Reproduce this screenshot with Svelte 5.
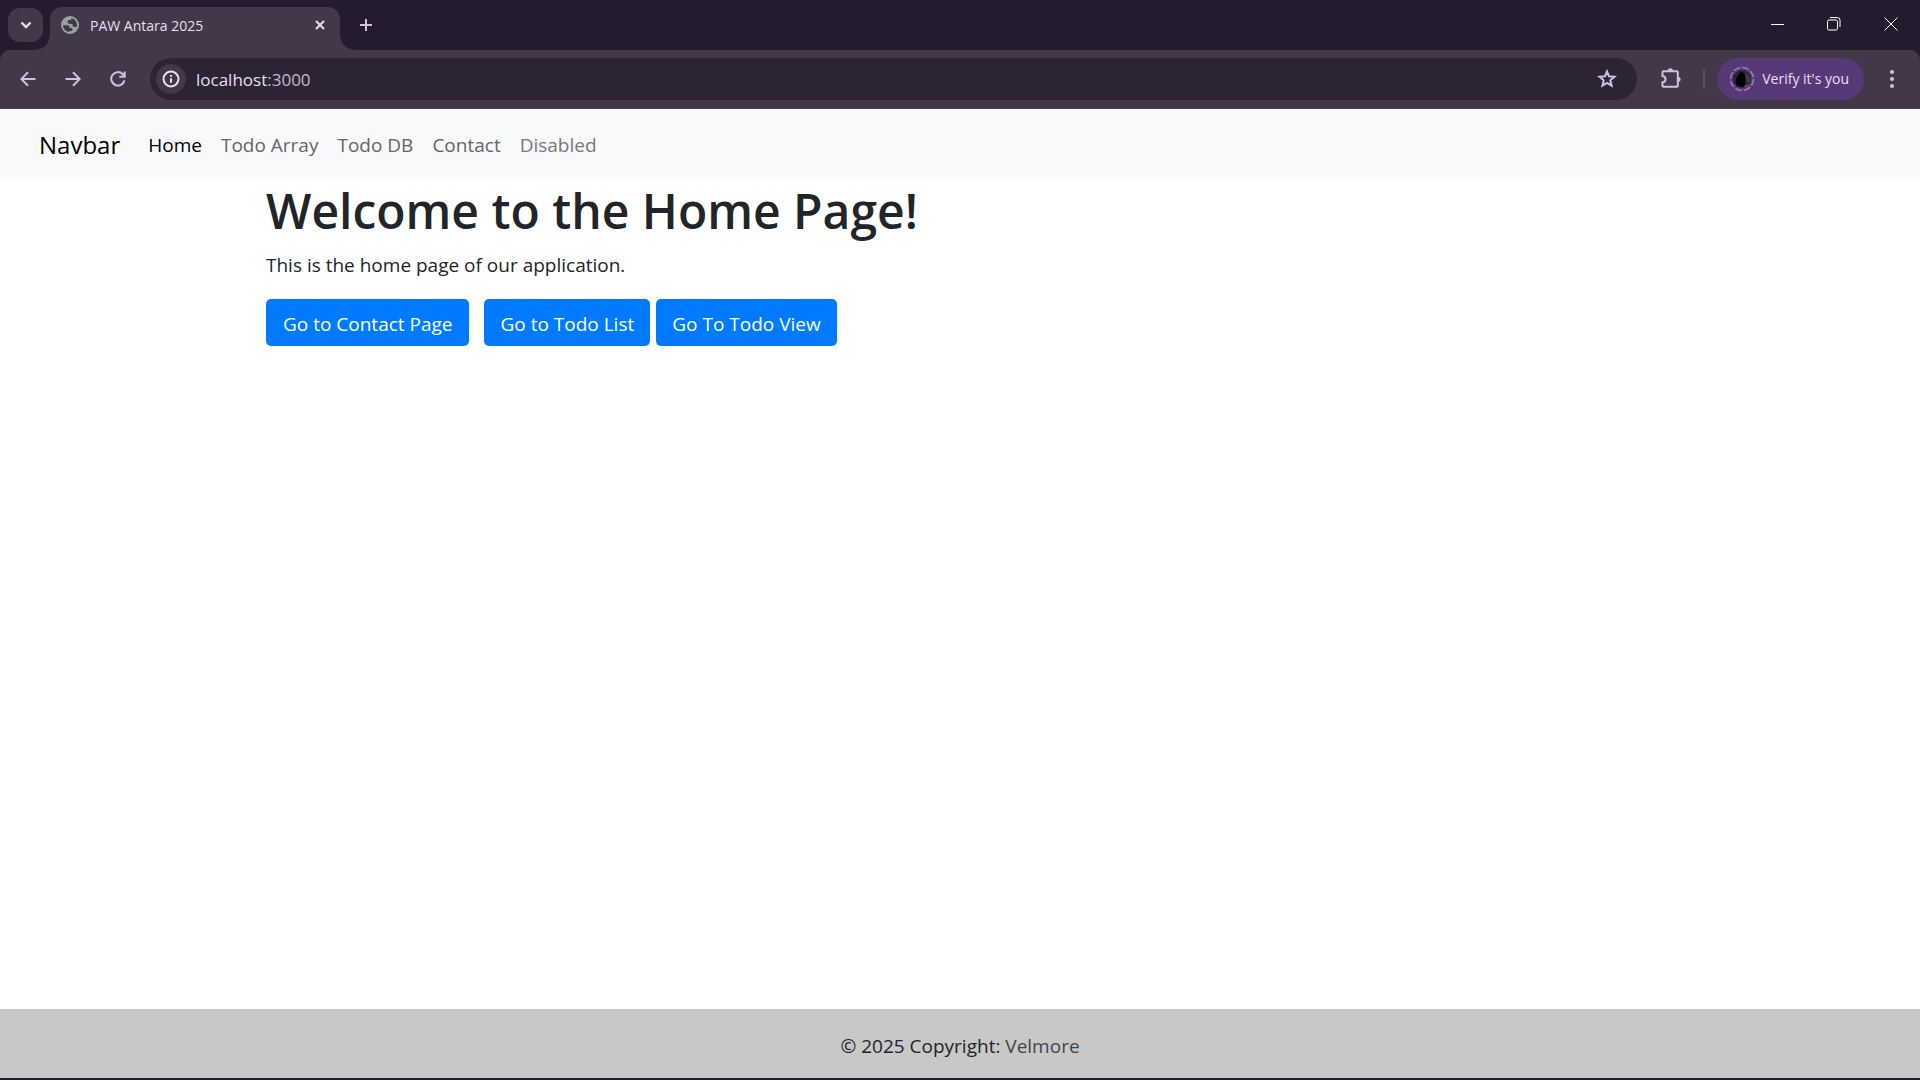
<script>
  const links = [
    { label: 'Home', state: 'active' },
    { label: 'Todo Array', state: '' },
    { label: 'Todo DB', state: '' },
    { label: 'Contact', state: '' },
    { label: 'Disabled', state: 'disabled' }
  ];
</script>

<div class="window">
  <header class="tabstrip">
    <button class="tab-search" aria-label="Search tabs">
      <svg width="12" height="8" viewBox="0 0 12 8"><path d="M1.5 1.5 6 6l4.500-4.500" /></svg>
    </button>
    <div class="tab">
      <svg class="globe" width="18" height="18" viewBox="0 0 18 18">
        <circle cx="9" cy="9" r="9" fill="#9aa0a6" />
        <path d="M2 9.300h4.500c1.300 0 2 .8 2 2v.6h2.200c.5 0 .8.4.8.8v.8c0 .9-.7 1.500-1.600 1.500H8.300v1C4.700 15.700 2 12.800 2 9.300zM10.500 2.200c3 .6 5.500 3.400 5.500 6.800 0 .7-.1 1.300-.3 1.900h-2.200c-1.300 0-2-.9-2-2V8H9.200c-1.500 0-2.700-.9-2.700-2.200S7.500 4 8.700 4h.6c.7 0 1.200-.5 1.200-1.200z" fill="#42384a" />
      </svg>
      <span class="tab-title">PAW Antara 2025</span>
      <button class="icon small" aria-label="Close tab">
        <svg width="10" height="10" viewBox="0 0 10 10"><path d="m1 1 8 8M9 1 1 9" /></svg>
      </button>
    </div>
    <button class="icon new-tab" aria-label="New tab">
      <svg width="14" height="14" viewBox="0 0 14 14"><path d="M7 1v12M1 7h12" /></svg>
    </button>
    <div class="controls">
      <button aria-label="Minimize"><svg width="14" height="14" viewBox="0 0 14 14"><path d="M1 7.500h13" /></svg></button>
      <button aria-label="Restore">
        <svg width="14" height="14" viewBox="0 0 14 14"><rect x=".5" y="3" width="10" height="10" rx="1.500" /><path d="M3 .6h7.500a2.500 2.500 0 0 1 2.500 2.500V10" /></svg>
      </button>
      <button aria-label="Close"><svg width="14" height="14" viewBox="0 0 14 14"><path d="m.5.5 13 13M13.500.5l-13 13" /></svg></button>
    </div>
  </header>

  <div class="toolbar">
    <div class="history">
      <button class="icon" aria-label="Back"><svg width="16" height="16" viewBox="0 0 16 16"><path d="M15.500 8H1.500M8 1.200 1.300 8 8 14.800" /></svg></button>
      <button class="icon" aria-label="Forward"><svg width="16" height="16" viewBox="0 0 16 16"><path d="M.5 8h14M8 1.200 14.700 8 8 14.800" /></svg></button>
      <button class="icon" aria-label="Reload"><svg width="16" height="16" viewBox="0 0 16 16"><path d="M14.500 9.200A6.700 6.700 0 1 1 12.800 3.200L14.500 5M14.700.5v5.300H9.300" /></svg></button>
    </div>
    <div class="omnibox">
      <button class="info" aria-label="Site information">
        <svg width="18" height="18" viewBox="0 0 18 18"><circle cx="9" cy="9" r="7.500" /><path d="M9 8.200v4.600M9 5v1.800" /></svg>
      </button>
      <div class="address" role="textbox" aria-label="Address" tabindex="0"><span>localhost</span>:3000</div>
      <button class="icon" aria-label="Bookmark">
        <svg width="20" height="20" viewBox="0 0 20 20"><path d="m10 2.400 2 4.900 5.500.5-4.200 3.500 1.300 5.300L10 13.800l-4.600 2.800 1.300-5.300-4.200-3.500 5.500-.5z" /></svg>
      </button>
    </div>
    <button class="icon extensions" aria-label="Extensions">
      <svg width="22" height="22" viewBox="0 0 22 22">
        <path d="M3.500 3.200h13.300q1 0 1 1v13.600q0 1-1 1H3.500q-1 0-1-1v-3.600c4-.3 4-5.800 0-6.200V4.200q0-1 1-1z" />
        <path class="solid" d="M7.700 2.800a2.600 2.600 0 0 1 5.200 0zM18.200 8.800a2.500 2.500 0 0 1 0 5z" />
      </svg>
    </button>
    <span class="separator"></span>
    <button class="profile">
      <svg width="26" height="26" viewBox="0 0 26 26">
        <circle class="dashes" cx="13" cy="13" r="11.500" />
        <circle cx="13" cy="13" r="9" fill="#29252a" />
        <path d="M8 20c-2-4-1-8 1-10l2-4 4 1 2 5-1 9z" fill="#020204" />
        <path d="m16 19 4-1-2 3h-3z" fill="#83451f" />
        <path d="M16 7c4 1 5 4 5 9l-4 1z" fill="#443a36" />
      </svg>
      Verify it's you
    </button>
    <button class="icon menu" aria-label="Menu">
      <svg width="6" height="20" viewBox="0 0 6 20"><g class="solid"><circle cx="3" cy="3" r="2" /><circle cx="3" cy="10" r="2" /><circle cx="3" cy="17" r="2" /></g></svg>
    </button>
  </div>

  <nav class="navbar">
    <a class="brand" href="#home">Navbar</a>
    {#each links as link}
      <a class="link {link.state}" href="#{link.label}">{link.label}</a>
    {/each}
  </nav>

  <main>
    <h1>Welcome to the Home Page!</h1>
    <p>This is the home page of our application.</p>
    <div class="actions">
      <a class="btn first" href="#contact">Go to Contact Page</a>
      <a class="btn" href="#todo-list">Go to Todo List</a>
      <a class="btn" href="#todo-view">Go To Todo View</a>
    </div>
  </main>

  <footer>© 2025 Copyright: <a href="#velmore">Velmore</a></footer>
</div>

<style>
  :global(body) { margin: 0; background: #fff; }
  * { box-sizing: border-box; }
  .window {
    min-height: 100vh;
    display: flex;
    flex-direction: column;
    font: 19px/30px "Segoe UI", "Open Sans", "Noto Sans", sans-serif;
    color: #212529;
    background: linear-gradient(#241b2e 80px, #fff 80px);
    border-bottom: 2px solid #241b2e;
  }
  button { font: inherit; border: 0; padding: 0; background: none; color: inherit; display: flex; align-items: center; justify-content: center; }
  a { text-decoration: none; color: inherit; }
  svg { display: block; fill: none; stroke: currentColor; stroke-width: 2; flex: none; }
  .solid { fill: currentColor; stroke: none; }

  .tabstrip { display: flex; height: 50px; background: #241b2e; color: #dfd3e8; padding: 0 1px 0 8px; }
  .tab-search { width: 35px; height: 34px; margin: 8px 7px 0 0; border-radius: 12px; background: #42384a; color: #eadff0; }
  .tab-search svg { stroke-width: 2.4; }
  .tab {
    position: relative;
    display: flex;
    align-items: center;
    width: 290px;
    margin-top: 7px;
    padding: 0 10px 7px 11px;
    gap: 11px;
    border-radius: 12px 12px 0 0;
    background: #42384a;
    color: #eadff0;
  }
  .tab::before, .tab::after { content: ""; position: absolute; bottom: 0; width: 14px; height: 14px; }
  .tab::before { left: -14px; background: radial-gradient(circle at 0 0, transparent 13px, #42384a 14px); }
  .tab::after { right: -14px; background: radial-gradient(circle at 100% 0, transparent 13px, #42384a 14px); }
  .globe { stroke: none; }
  .tab-title { flex: 1; font-size: 14px; line-height: 20px; padding-top: 1px; }
  .icon { width: 36px; height: 36px; color: #d1c1dc; flex: none; }
  .small { width: 20px; height: 20px; color: #eadff0; }
  .new-tab { margin: 7px 0 0 8px; }
  .controls { display: flex; margin-left: auto; color: #fff; }
  .controls button { width: 57px; height: 48px; }
  .controls svg { stroke-width: 1; }

  .toolbar {
    display: flex;
    align-items: center;
    height: 59px;
    padding: 0 10px 1px;
    background: #42384a;
    box-shadow: inset 0 -1px #4b4154;
    border-radius: 10px 10px 0 0;
  }
  .history { display: flex; gap: 9px; margin-right: 14px; }
  .omnibox { display: flex; align-items: center; flex: 1; height: 42px; padding: 0 12px 0 6px; border-radius: 21px; background: #2c2335; }
  .info { width: 30px; height: 30px; border-radius: 50%; background: #42384a; color: #eadff0; }
  .address { flex: 1; margin-left: 10px; padding-top: 1px; font-size: 17px; line-height: 24px; color: #c5b9cd; }
  .address span { color: #eadff0; }
  .extensions { margin-left: 16px; }
  .separator { width: 2px; height: 20px; margin: 0 12px 0 14px; background: #584b62; }
  .profile { height: 42px; padding: 0 15px 0 12px; gap: 7px; border-radius: 21px; background: #563a76; color: #eedcfe; font-size: 14px; }
  .profile svg { stroke: none; }
  .profile .dashes { stroke: #a07ac4; stroke-width: 1.5; stroke-dasharray: 7 2; }
  .menu { margin-left: 10px; }

  .navbar { display: flex; align-items: center; height: 70px; padding: 2px 39px 0; gap: 19px; background: #f8f9fb; }
  .brand { font-size: 24px; color: #000; margin-right: 9px; }
  .link { color: #646566; }
  .link.active { color: #000; }
  .link.disabled { color: #76797b; }

  main { flex: 1; background: #fff; width: 100%; padding: 2px 266px 0; }
  h1 { margin: 0 0 9px; font-size: 48px; line-height: 60px; font-weight: 600; }
  p { margin: 0 0 19px; }
  .actions { display: flex; gap: 6px; }
  .btn { padding: 10px 16px 7px; border-radius: 5px; background: #007bff; color: #fff; }
  .first { margin-right: 9px; padding-left: 17px; padding-right: 17px; }

  footer { padding: 22px 20px 17px; line-height: 30px; text-align: center; background: #c8c8c8; }
  footer a { color: #424548; }
</style>
